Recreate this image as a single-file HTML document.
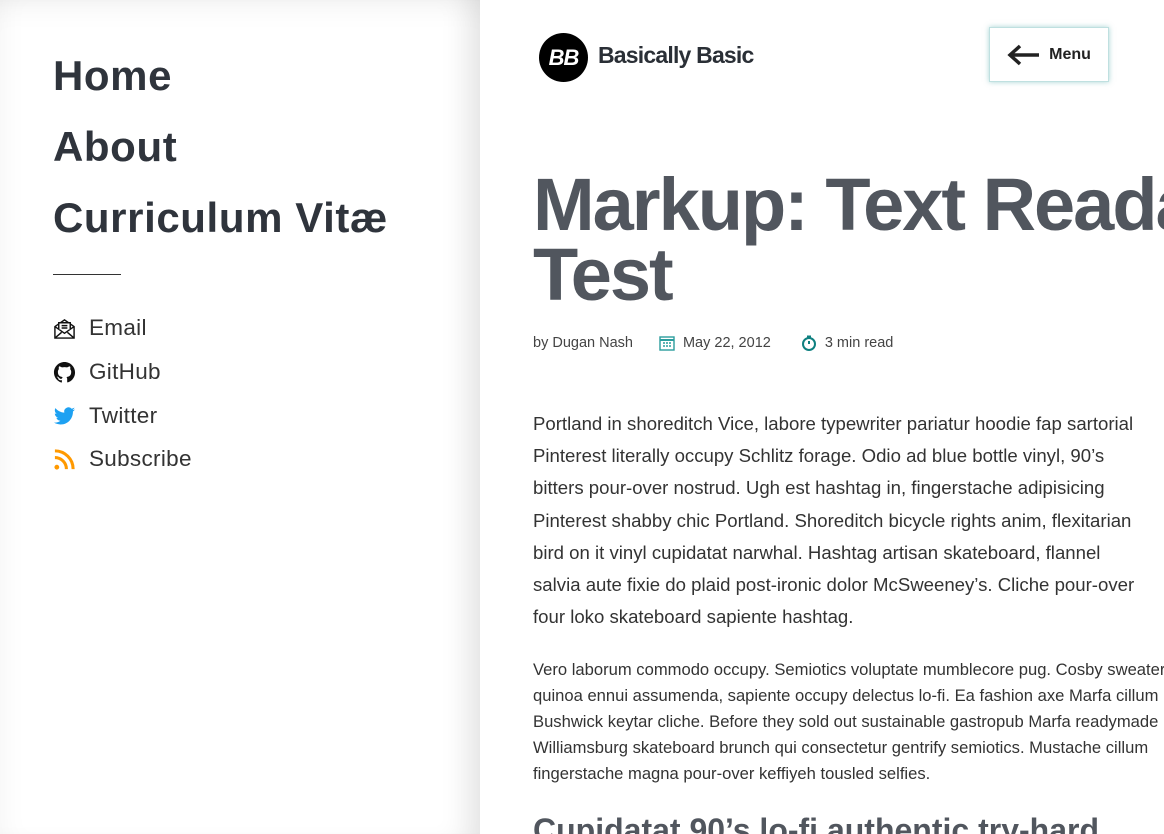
<!DOCTYPE html>
<html><head><meta charset="utf-8"><style>
*{margin:0;padding:0;box-sizing:border-box}
body{width:1164px;height:834px;overflow:hidden;background:#fff;font-family:"Liberation Sans",sans-serif;color:#333;position:relative}
.side{position:absolute;left:0;top:0;width:480px;height:834px;background:#fff;box-shadow:inset -30px 0 30px -20px rgba(0,0,0,.12), inset 0 30px 30px -25px rgba(0,0,0,.06), inset 20px 0 30px -20px rgba(0,0,0,.05)}
.nav{position:absolute;left:53px;font-weight:bold;font-size:42px;color:#2f343c;letter-spacing:0.6px}
.hr{position:absolute;left:53px;top:274px;width:68px;border-top:1px solid #333}
.lk{position:absolute;left:53px;font-size:22.5px;color:#333;display:flex;align-items:center;letter-spacing:0.3px}
.lk svg{width:23px;height:23px;margin-right:13px}
.main{position:absolute;left:480px;top:0;right:0;bottom:0;overflow:hidden}
.logo{position:absolute;left:59px;top:33px;width:49px;height:49px;border-radius:50%;background:#000;color:#fff;font-weight:bold;font-style:italic;font-size:22px;text-align:center;line-height:49px;letter-spacing:-1px}
.brand{position:absolute;left:118px;top:42px;font-size:23px;font-weight:bold;color:#2a2f36;letter-spacing:-0.8px}
.menu{position:absolute;left:509px;top:27px;width:120px;height:55px;border:1px solid #bfe0e0;box-shadow:0 0 5px rgba(80,170,170,.5);display:flex;align-items:center;justify-content:center;font-weight:bold;font-size:16px;color:#222}
h1{position:absolute;left:53px;top:170px;font-size:74px;line-height:70px;color:#51565e;white-space:nowrap;letter-spacing:-2px}
.meta{position:absolute;left:53px;top:335px;font-size:14.5px;color:#444;white-space:nowrap;display:flex;align-items:center}
.meta svg{margin-right:8px}
p{position:absolute;left:53px;white-space:nowrap;color:#333}
.p1{top:408px;font-size:18.6px;line-height:32.2px}
.p2{top:657px;font-size:16.6px;line-height:26px}
h2{position:absolute;left:53px;top:812px;font-size:32px;color:#51565e;white-space:nowrap}
</style></head><body>
<div class="side">
<div class="nav" style="top:52px">Home</div>
<div class="nav" style="top:123px">About</div>
<div class="nav" style="top:194px">Curriculum Vitæ</div>
<div class="hr"></div>
<div class="lk" style="top:315px"><svg viewBox="0 0 24 24" fill="none" stroke="#111" stroke-width="1.5"><path d="M2 10v12h20V10L12 3z"/><path d="M2 10l10 7 10-7M2 22l7-6M22 22l-7-6"/><path d="M6 13V6h12v7" fill="#fff"/><path d="M9 9h6M9 11.5h6"/></svg>Email</div>
<div class="lk" style="top:359px"><svg viewBox="0 0 24 24"><path fill="#111" d="M12 1C5.9 1 1 5.9 1 12c0 4.9 3.2 9 7.5 10.4.6.1.8-.2.8-.5v-2c-3.1.7-3.700-1.300-3.700-1.300-.5-1.300-1.200-1.600-1.200-1.600-1-.7.1-.7.1-.7 1.100.1 1.700 1.100 1.700 1.100 1 1.700 2.600 1.200 3.200.9.1-.7.4-1.200.7-1.500-2.400-.3-5-1.200-5-5.400 0-1.200.4-2.200 1.100-2.900-.1-.3-.5-1.400.1-2.900 0 0 .9-.3 3 1.100a10.500 10.500 0 0 1 5.500 0c2.100-1.400 3-1.100 3-1.100.6 1.500.2 2.600.1 2.900.7.8 1.100 1.700 1.100 2.900 0 4.200-2.600 5.100-5 5.400.4.300.8 1 .8 2v3c0 .3.2.6.8.5C19.800 21 23 16.900 23 12 23 5.900 18.100 1 12 1z"/></svg>GitHub</div>
<div class="lk" style="top:403px"><svg viewBox="0 0 24 24"><path fill="#1da1f2" d="M23 4.600c-.8.4-1.700.6-2.600.7.9-.6 1.600-1.400 2-2.500-.9.5-1.900.9-2.900 1.100a4.500 4.500 0 0 0-7.700 4.100C8 7.800 4.700 6 2.500 3.300c-1.200 2.100-.5 4.700 1.400 6-.7 0-1.400-.2-2-.6 0 2.200 1.600 4.100 3.600 4.500-.7.200-1.400.2-2 .1.600 1.800 2.300 3.100 4.200 3.100A9.100 9.100 0 0 1 1 18.300 12.800 12.800 0 0 0 7.900 20.300c8.300 0 12.900-6.900 12.900-12.900v-.6c.9-.6 1.600-1.400 2.200-2.200z"/></svg>Twitter</div>
<div class="lk" style="top:446px"><svg viewBox="0 0 24 24" fill="none" stroke="#f90" stroke-width="3.2"><circle cx="4" cy="20" r="2.5" fill="#f90" stroke="none"/><path d="M2 10a12 12 0 0 1 12 12M2 3a19 19 0 0 1 19 19"/></svg>Subscribe</div>
</div>
<div class="main">
<div class="logo">BB</div>
<div class="brand">Basically Basic</div>
<div class="menu"><svg width="34" height="22" viewBox="0 0 34 22" style="margin-right:8px"><path d="M32 11H4M13 2L3 11l10 9" fill="none" stroke="#222" stroke-width="3.5"/></svg>Menu</div>
<h1>Markup: Text Readability<br>Test</h1>
<div class="meta">by Dugan Nash<span style="width:26px"></span><svg width="16" height="16" viewBox="0 0 16 16"><rect x="1" y="2" width="14" height="13" fill="none" stroke="#2a9d9d" stroke-width="1.4"/><path d="M1 5h14" stroke="#2a9d9d" stroke-width="2"/><path d="M4 8h2M7 8h2M10 8h2M4 11h2M7 11h2M10 11h2" stroke="#2a9d9d" stroke-width="1.4"/></svg>May 22, 2012<span style="width:30px"></span><svg width="16" height="16" viewBox="0 0 16 16"><circle cx="8" cy="9" r="6" fill="none" stroke="#0f8080" stroke-width="2"/><path d="M8 9V6M6 1.5h4" stroke="#0f8080" stroke-width="2"/></svg>3 min read</div>
<p class="p1">Portland in shoreditch Vice, labore typewriter pariatur hoodie fap sartorial<br>Pinterest literally occupy Schlitz forage. Odio ad blue bottle vinyl, 90’s<br>bitters pour-over nostrud. Ugh est hashtag in, fingerstache adipisicing<br>Pinterest shabby chic Portland. Shoreditch bicycle rights anim, flexitarian<br>bird on it vinyl cupidatat narwhal. Hashtag artisan skateboard, flannel<br>salvia aute fixie do plaid post-ironic dolor McSweeney’s. Cliche pour-over<br>four loko skateboard sapiente hashtag.</p>
<p class="p2">Vero laborum commodo occupy. Semiotics voluptate mumblecore pug. Cosby sweater<br>quinoa ennui assumenda, sapiente occupy delectus lo-fi. Ea fashion axe Marfa cillum<br>Bushwick keytar cliche. Before they sold out sustainable gastropub Marfa readymade<br>Williamsburg skateboard brunch qui consectetur gentrify semiotics. Mustache cillum<br>fingerstache magna pour-over keffiyeh tousled selfies.</p>
<h2>Cupidatat 90’s lo-fi authentic try-hard</h2>
</div>
</body></html>
